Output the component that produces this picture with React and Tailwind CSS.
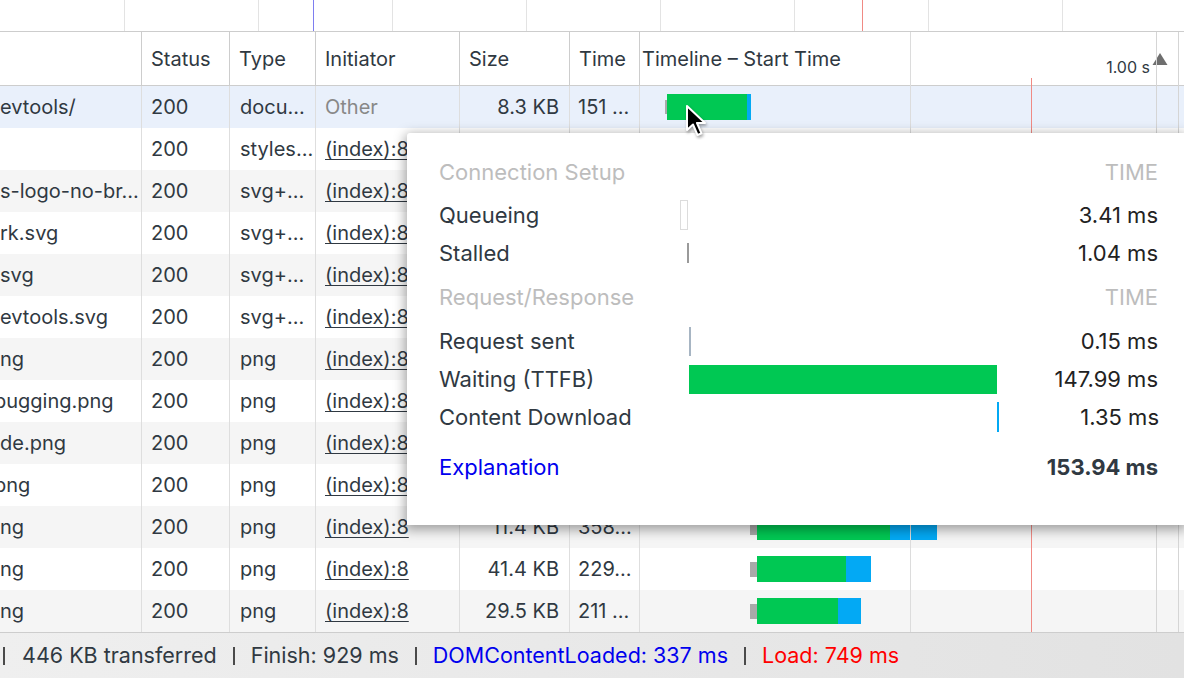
import React from "react";

const rows = [
  { name: "evtools/", type: "docu...", init: "Other", size: "8.3 KB", time: "151 ...", bar: { off: 25, q: 2, qh: 14, g: 80, b: 4 } },
  { name: "", type: "styles...", init: "(index):8", size: "2.1 KB", time: "98 ms", bar: { off: 110, q: 7, qh: 15, g: 60, b: 20 } },
  { name: "s-logo-no-br...", type: "svg+...", init: "(index):8", size: "1.9 KB", time: "120...", bar: { off: 110, q: 7, qh: 15, g: 70, b: 10 } },
  { name: "rk.svg", type: "svg+...", init: "(index):8", size: "1.2 KB", time: "118...", bar: { off: 110, q: 7, qh: 15, g: 70, b: 8 } },
  { name: "svg", type: "svg+...", init: "(index):8", size: "1.4 KB", time: "121...", bar: { off: 110, q: 7, qh: 15, g: 72, b: 8 } },
  { name: "evtools.svg", type: "svg+...", init: "(index):8", size: "2.6 KB", time: "130...", bar: { off: 110, q: 7, qh: 15, g: 75, b: 10 } },
  { name: "ng", type: "png", init: "(index):8", size: "52.3 KB", time: "240...", bar: { off: 110, q: 7, qh: 15, g: 90, b: 30 } },
  { name: "bugging.png", cut: true, type: "png", init: "(index):8", size: "38.0 KB", time: "231...", bar: { off: 110, q: 7, qh: 15, g: 88, b: 26 } },
  { name: "de.png", type: "png", init: "(index):8", size: "44.7 KB", time: "250...", bar: { off: 110, q: 7, qh: 15, g: 92, b: 30 } },
  { name: "png", cut: true, type: "png", init: "(index):8", size: "20.1 KB", time: "205...", bar: { off: 110, q: 7, qh: 15, g: 80, b: 20 } },
  { name: "ng", type: "png", init: "(index):8", size: "11.4 KB", time: "358...", bar: { off: 110, q: 7, qh: 15, g: 133, b: 47 } },
  { name: "ng", type: "png", init: "(index):8", size: "41.4 KB", time: "229...", bar: { off: 110, q: 7, qh: 15, g: 89, b: 25 } },
  { name: "ng", type: "png", init: "(index):8", size: "29.5 KB", time: "211 ...", bar: { off: 110, q: 7, qh: 15, g: 81, b: 23 } },
];

const overviewLines = [124, 258, 392, 526, 660, 794, 928, 1062];

const cols = "grid grid-cols-[142px_88px_86px_144px_110px_70px_1fr]";

const Cursor = () => (
  <svg className="absolute left-[684px] top-[104px]" width="26" height="36" viewBox="0 0 26 36">
    <path d="M3 2 L3 26 L9 20.5 L13.5 31 L17.5 29.3 L13 19 L21 19 Z" fill="#000" stroke="#fff" strokeWidth="2" strokeLinejoin="round" style={{ filter: "drop-shadow(1px 2px 1.5px rgba(0,0,0,0.35))" }} />
  </svg>
);

const TimingRow = ({ label, value, children, className = "" }) => (
  <div className={`flex items-center h-[38px] ${className}`}>
    <span className="w-[241px] shrink-0 text-[#303942] whitespace-nowrap">{label}</span>
    <div className="flex-1 h-full flex items-center">{children}</div>
    <span className="w-[160px] shrink-0 text-right text-[#222]">{value}</span>
  </div>
);

const Sep = () => <span className="mx-[16px] w-[2px] h-[18px] bg-[#4a4a4a]" />;

export default function App() {
  return (
    <div className="relative w-[1184px] h-[678px] overflow-hidden bg-white text-[20px] text-[#303942] font-['Inter','Noto_Sans',sans-serif]">
      {/* overview strip */}
      <div className="relative h-[32px] border-b border-[#cdcdcd]">
        {overviewLines.map((x) => (
          <div key={x} className="absolute top-0 bottom-0 w-px bg-[#e3e3e3]" style={{ left: x }} />
        ))}
        <div className="absolute top-0 bottom-0 left-[313px] w-px bg-[#7e7ef0]" />
        <div className="absolute top-0 bottom-0 left-[862px] w-px bg-[#f08a84]" />
      </div>

      {/* table */}
      <div className="relative">
        {/* header */}
        <div className={`${cols} h-[54px] border-b border-[#cdcdcd] bg-white`}>
          <div className="border-r border-[#cdcdcd]" />
          <div className="border-r border-[#cdcdcd] pl-[9px] flex items-center">Status</div>
          <div className="border-r border-[#cdcdcd] pl-[9px] flex items-center">Type</div>
          <div className="border-r border-[#cdcdcd] pl-[9px] flex items-center">Initiator</div>
          <div className="border-r border-[#cdcdcd] pl-[9px] flex items-center">Size</div>
          <div className="border-r border-[#cdcdcd] pl-[9px] flex items-center">Time</div>
          <div className="relative flex items-center pl-[2px]">
            <span>Timeline – Start Time</span>
            <span className="absolute right-[34px] top-[23px] text-[16px] text-[#303942]">1.00 s</span>
            <svg className="absolute right-[16px] top-[20px]" width="16" height="14" viewBox="0 0 16 14">
              <path d="M8 1 L15.5 13 L0.5 13 Z" fill="#6e6e6e" />
            </svg>
          </div>
        </div>

        {/* rows */}
        {rows.map((r, i) => (
          <div
            key={i}
            className={`${cols} h-[42px] ${i === 0 ? "bg-[#e9f0fb]" : i % 2 === 0 ? "bg-[#f5f5f5]" : "bg-white"}`}
          >
            <div className="border-r border-[#dedede] flex items-center overflow-hidden whitespace-nowrap">
              <span className={r.cut ? "-ml-[6px]" : ""}>{r.name}</span>
            </div>
            <div className="border-r border-[#dedede] pl-[9px] flex items-center">200</div>
            <div className="border-r border-[#dedede] pl-[10px] flex items-center whitespace-nowrap">{r.type}</div>
            <div className="border-r border-[#dedede] pl-[9px] flex items-center whitespace-nowrap">
              {r.init === "Other" ? (
                <span className="text-[#888]">Other</span>
              ) : (
                <span className="underline underline-offset-[3px] decoration-1">{r.init}</span>
              )}
            </div>
            <div className="border-r border-[#dedede] pr-[10px] flex items-center justify-end whitespace-nowrap">{r.size}</div>
            <div className="border-r border-[#dedede] pl-[8px] flex items-center whitespace-nowrap">{r.time}</div>
            <div className="flex items-center">
              <div className="flex items-center" style={{ marginLeft: r.bar.off }}>
                <div className="bg-[#a9a9a9]" style={{ width: r.bar.q, height: r.bar.qh }} />
                <div className="h-[26px] bg-[#00c853]" style={{ width: r.bar.g }} />
                <div className="h-[26px] bg-[#03a9f4]" style={{ width: r.bar.b }} />
              </div>
            </div>
          </div>
        ))}

        {/* timeline grid overlay */}
        <div className="absolute top-0 bottom-0 left-[910px] w-px bg-[#dcdcdc]" />
        <div className="absolute top-0 bottom-0 left-[1156px] w-px bg-[#d5d5d5]" />
        <div className="absolute top-0 bottom-0 left-[1178px] w-px bg-[#d5d5d5]" />
        <div className="absolute top-[46px] bottom-0 left-[1031px] w-px bg-[#f08a84]" />
      </div>

      {/* status bar */}
      <div className="h-[46px] border-t border-[#cdcdcd] bg-gradient-to-r from-[#efefef] to-[#e2e2e2] flex items-center pl-[3px] whitespace-nowrap text-[21.5px]">
        <span className="w-[2px] h-[18px] bg-[#4a4a4a]" />
        <span className="ml-[17px]">446 KB transferred</span>
        <Sep />
        <span>Finish: 929 ms</span>
        <Sep />
        <span className="text-[#0000ee]">DOMContentLoaded: 337 ms</span>
        <Sep />
        <span className="text-[#ff0000]">Load: 749 ms</span>
      </div>

      {/* timing tooltip */}
      <div className="absolute left-[407px] top-[133px] right-0 bg-white rounded-tl-[3px] shadow-[0_3px_12px_2px_rgba(0,0,0,0.35)] pl-[32px] pr-[26px] pt-[20px] pb-[39px] text-[22px]">
        <div className="flex items-center justify-between h-[38px] text-[#bdbdbd]">
          <span>Connection Setup</span>
          <span>TIME</span>
        </div>
        <TimingRow label="Queueing" value="3.41 ms" className="mt-[5px]">
          <div className="w-[8px] h-[30px] border border-[#dcdcdc]" />
        </TimingRow>
        <TimingRow label="Stalled" value="1.04 ms">
          <div className="ml-[7px] w-[2px] h-[20px] bg-[#9a9a9a]" />
        </TimingRow>
        <div className="flex items-center justify-between h-[38px] mt-[6px] text-[#bdbdbd]">
          <span>Request/Response</span>
          <span>TIME</span>
        </div>
        <TimingRow label="Request sent" value="0.15 ms" className="mt-[6px]">
          <div className="ml-[9px] w-[2px] h-[29px] bg-[#a7b5c3]" />
        </TimingRow>
        <TimingRow label="Waiting (TTFB)" value="147.99 ms">
          <div className="ml-[9px] w-[308px] h-[29px] bg-[#00c853]" />
        </TimingRow>
        <TimingRow label="Content Download" value="1.35 ms">
          <div className="ml-[317px] w-[2px] h-[30px] bg-[#03a9f4]" />
        </TimingRow>
        <div className="flex items-center justify-between h-[38px] mt-[12px]">
          <span className="text-[#0000ee]">Explanation</span>
          <span className="font-bold text-[#303942]">153.94 ms</span>
        </div>
      </div>

      <Cursor />
    </div>
  );
}
